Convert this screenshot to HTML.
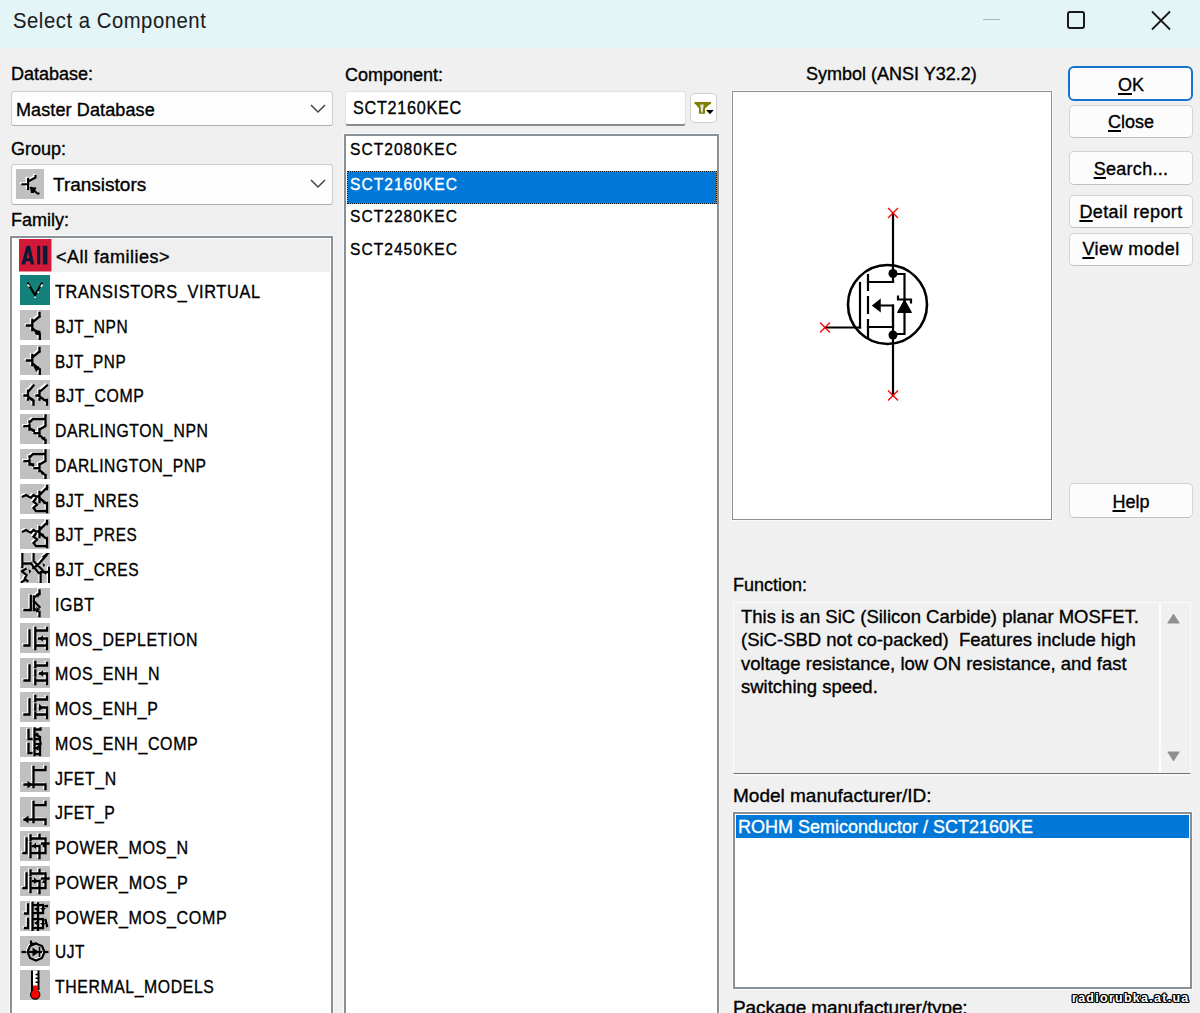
<!DOCTYPE html>
<html><head><meta charset="utf-8">
<style>
*{box-sizing:border-box;margin:0;padding:0}
html,body{width:1200px;height:1013px;overflow:hidden;background:#f0f0f0;font-family:"Liberation Sans",sans-serif;color:#000}
.a{position:absolute}
.t{position:absolute;white-space:pre;line-height:1;-webkit-text-stroke:0.35px currentColor}
#title{left:0;top:0;width:1200px;height:48px;background:#e3f5f7}
.dd{position:absolute;background:#fdfdfd;border:1.5px solid #cdcdcd;border-bottom:1.5px solid #b0b0b0;border-radius:3px}
.tb{position:absolute;background:#fff;border:1.2px solid #e2e2e2;border-bottom:2.2px solid #8c8c8c;border-radius:4px}
.btn{position:absolute;background:#fcfcfc;border:1.5px solid #d3d3d3;border-bottom-color:#c0c0c0;border-radius:5px}
.lb{position:absolute;background:#fff;border:2px solid #8a9097;box-shadow:0 0 0 1px #fafafa}
.ico{position:absolute;width:30px;height:30px;background:#c0c0c0}
.ico svg{display:block}
.bt{position:absolute;white-space:pre;line-height:1;-webkit-text-stroke:0.35px currentColor;width:124px;text-align:center;left:1069px}
.u{text-decoration:underline;text-decoration-thickness:2px;text-underline-offset:1.5px}
</style></head><body>
<div id="title" class="a">
  <div class="t" style="left:13px;top:10.1px;font-size:22px;letter-spacing:0.6px;transform:scaleX(0.92);transform-origin:0 0;-webkit-text-stroke:0.1px currentColor;color:#1c1c1c">Select a Component</div>
  <div class="a" style="left:983px;top:19px;width:17px;height:1px;background:#a9b8ba"></div>
  <div class="a" style="left:1067px;top:11px;width:18px;height:18px;border:2px solid #1a1a1a;border-radius:3px"></div>
  <svg class="a" style="left:1150px;top:10px" width="22" height="22" viewBox="0 0 22 22"><path d="M2 1.5 L20 19.5 M20 1.5 L2 19.5" stroke="#1a1a1a" stroke-width="1.8"/></svg>
</div>

<!-- Left column -->
<div class="t" style="left:11px;top:65px;font-size:18px">Database:</div>
<div class="dd" style="left:10.5px;top:91.25px;width:322px;height:34.25px"></div>
<div class="t" style="left:16px;top:100.5px;font-size:18px;letter-spacing:0.12px">Master Database</div>
<svg class="a" style="left:310px;top:104px" width="16" height="10"><path d="M1 1 L8 8 L15 1" fill="none" stroke="#444" stroke-width="1.5"/></svg>

<div class="t" style="left:11px;top:139.5px;font-size:18px">Group:</div>
<div class="dd" style="left:10.5px;top:164.2px;width:322px;height:40.8px"></div>
<div class="ico" style="left:16px;top:169.2px;width:28.4px;height:30px"><svg width="28.4" height="30" viewBox="0 0 28.4 30"><path d="M5.4 15.3H12.1M12.1 9V21M12.1 12.5L19.5 8.5V6M14 18L21.5 24.5H23.5" stroke="#fff" stroke-width="1.8" fill="none" transform="translate(-1.6,-1.2)"/><path d="M5.4 15.3H12.1M12.1 9V21M12.1 12.5L19.5 8.5V6M14 18L21.5 24.5H23.5" stroke="#000" stroke-width="2.1" fill="none"/><path d="M14 18L20.5 18.5L18 24H15Z" fill="#000"/></svg></div>
<div class="t" style="left:53px;top:175px;font-size:19px">Transistors</div>
<svg class="a" style="left:310px;top:179px" width="16" height="10"><path d="M1 1 L8 8 L15 1" fill="none" stroke="#444" stroke-width="1.5"/></svg>

<div class="t" style="left:11px;top:211px;font-size:18px">Family:</div>
<div class="lb" style="left:10px;top:236px;width:323px;height:800px"></div>
<div class="a" style="left:52px;top:239px;width:278px;height:33px;background:#efefef"></div>
<svg class="a" style="left:19.25px;top:239px" width="32.5" height="32.5" viewBox="0 0 32.5 32.5"><rect width="32.5" height="32.5" fill="#d21a38"/><path d="M2.3 25.4L7.6 6.8H11.2L15.2 25.4H11.8L11 22.3H7L6 25.4Z M7.9 19.2H10.3L9.1 12.5Z" fill="#0b1836" fill-rule="evenodd"/><rect x="18.1" y="6.8" width="3.2" height="18.6" fill="#0b1836"/><rect x="23.8" y="6.8" width="4.6" height="18.6" fill="#0b1836"/></svg>
<svg class="a" style="left:20px;top:275px" width="30" height="30" viewBox="0 0 30 30"><rect width="30" height="30" fill="#13807c"/><path d="M7.5 7.5L15 20L22.3 7.5" stroke="#000" stroke-width="2.2" fill="none"/><path d="M7.5 9.5L9.5 11.5M22.5 9.5L20.8 12M15 21.5V23M18.3 16.5V18" stroke="#fff" stroke-width="1.5"/></svg>
<div class="t" style="left:56px;top:248.36px;font-size:18px;color:#000;transform:scaleX(1.0000);transform-origin:0 0;letter-spacing:0.5px">&lt;All families&gt;</div>
<div class="t" style="left:55px;top:283.11px;font-size:18px;color:#000;transform:scaleX(0.9071);transform-origin:0 0;letter-spacing:0.7px">TRANSISTORS_VIRTUAL</div>
<div class="ico" style="left:20px;top:310.00px"><svg width="30" height="30" viewBox="0 0 30 30" preserveAspectRatio="none"><path d="M7 15.5H12.3M12.3 10V20M12.3 12.5L19.5 6.5M19.5 3V6.5M12.3 18L19.5 24.5M19.8 24.5V29" stroke="#fff" stroke-width="1.8" fill="none" stroke-linecap="square" transform="translate(-1.6,-1.2)"/><path d="M7 15.5H12.3M12.3 10V20M12.3 12.5L19.5 6.5M19.5 3V6.5M12.3 18L19.5 24.5M19.8 24.5V29" stroke="#000" stroke-width="2.3" fill="none" stroke-linecap="square"/><path d="M14 19.5L20.5 21V25.5L15.5 24.5Z" fill="#000"/></svg></div>
<div class="t" style="left:55px;top:317.86px;font-size:18px;color:#000;transform:scaleX(0.8627);transform-origin:0 0;letter-spacing:0.7px">BJT_NPN</div>
<div class="ico" style="left:20px;top:344.75px"><svg width="30" height="30" viewBox="0 0 30 30" preserveAspectRatio="none"><path d="M7 15.5H12.3M12.3 10V20M12.3 12.5L19.5 6.5M19.5 3V6.5M12.3 18L19.5 24.5M19.8 24.5V29" stroke="#fff" stroke-width="1.8" fill="none" stroke-linecap="square" transform="translate(-1.6,-1.2)"/><path d="M7 15.5H12.3M12.3 10V20M12.3 12.5L19.5 6.5M19.5 3V6.5M12.3 18L19.5 24.5M19.8 24.5V29" stroke="#000" stroke-width="2.3" fill="none" stroke-linecap="square"/><path d="M12.8 19.8L19.8 22L16.2 27Z" fill="#000"/></svg></div>
<div class="t" style="left:55px;top:352.61px;font-size:18px;color:#000;transform:scaleX(0.8489);transform-origin:0 0;letter-spacing:0.7px">BJT_PNP</div>
<div class="ico" style="left:20px;top:379.50px"><svg width="30" height="30" viewBox="0 0 30 30" preserveAspectRatio="none"><path d="M4.5 15.5H8M8 10.7V19.5M8 12L13.5 5.5M8 16.5L13.5 21M13.5 21V24.5M16.5 15.5H19.5M19.5 10.7V19.5M19.5 12L27 5.5M19.5 16.5L24.5 20H27V24.5" stroke="#fff" stroke-width="1.8" fill="none" stroke-linecap="square" transform="translate(-1.6,-1.2)"/><path d="M4.5 15.5H8M8 10.7V19.5M8 12L13.5 5.5M8 16.5L13.5 21M13.5 21V24.5M16.5 15.5H19.5M19.5 10.7V19.5M19.5 12L27 5.5M19.5 16.5L24.5 20H27V24.5" stroke="#000" stroke-width="2.3" fill="none" stroke-linecap="square"/><path d="M10.5 17.5L14 19L12.5 21Z" fill="#000"/><path d="M22 18L26 19.5V22L24 21Z" fill="#000"/></svg></div>
<div class="t" style="left:55px;top:387.36px;font-size:18px;color:#000;transform:scaleX(0.8800);transform-origin:0 0;letter-spacing:0.7px">BJT_COMP</div>
<div class="ico" style="left:20px;top:414.25px"><svg width="30" height="30" viewBox="0 0 30 30" preserveAspectRatio="none"><path d="M4.5 12.2H9.5M9.5 7.5V15.5M9.5 8.5L13 5H25.5M25.5 1.5V12L19.5 15.5M19.5 15V22M9.5 14L13 16.5M14.5 19.2H19.5M19.5 21L25.5 26.5M25.5 26V29" stroke="#fff" stroke-width="1.8" fill="none" stroke-linecap="square" transform="translate(-1.6,-1.2)"/><path d="M4.5 12.2H9.5M9.5 7.5V15.5M9.5 8.5L13 5H25.5M25.5 1.5V12L19.5 15.5M19.5 15V22M9.5 14L13 16.5M14.5 19.2H19.5M19.5 21L25.5 26.5M25.5 26V29" stroke="#000" stroke-width="2.3" fill="none" stroke-linecap="square"/><path d="M12 14.5L15 15.5V18.5L12.5 17.5Z" fill="#000"/><path d="M21 24.5L25.5 22.5L24.5 27Z" fill="#000"/></svg></div>
<div class="t" style="left:55px;top:422.11px;font-size:18px;color:#000;transform:scaleX(0.8747);transform-origin:0 0;letter-spacing:0.7px">DARLINGTON_NPN</div>
<div class="ico" style="left:20px;top:449.00px"><svg width="30" height="30" viewBox="0 0 30 30" preserveAspectRatio="none"><path d="M4.5 12.2H9.5M9.5 7.5V15.5M9.5 8.5L13 5H25.5M25.5 1.5V12L19.5 15.5M19.5 15V22M9.5 14L13 16.5M14.5 19.2H19.5M19.5 21L25.5 26.5M25.5 26V29" stroke="#fff" stroke-width="1.8" fill="none" stroke-linecap="square" transform="translate(-1.6,-1.2)"/><path d="M4.5 12.2H9.5M9.5 7.5V15.5M9.5 8.5L13 5H25.5M25.5 1.5V12L19.5 15.5M19.5 15V22M9.5 14L13 16.5M14.5 19.2H19.5M19.5 21L25.5 26.5M25.5 26V29" stroke="#000" stroke-width="2.3" fill="none" stroke-linecap="square"/><path d="M12 14L14.5 14.5L13.5 18Z" fill="#000"/><path d="M20 21.5L24.5 23.5L22 26Z" fill="#000"/></svg></div>
<div class="t" style="left:55px;top:456.86px;font-size:18px;color:#000;transform:scaleX(0.8688);transform-origin:0 0;letter-spacing:0.7px">DARLINGTON_PNP</div>
<div class="ico" style="left:20px;top:483.75px"><svg width="30" height="30" viewBox="0 0 30 30" preserveAspectRatio="none"><path d="M3 12.5L6 11L8.5 12.5L11 13.7L13.5 11L16 12.5H19.5M19.5 8V18M19.5 11L27 3.5M27 2V5M19.5 14L25.5 19H27V28M15.5 15L13.5 17.5L17 20.5L13.5 24L16 27H27" stroke="#fff" stroke-width="1.8" fill="none" stroke-linecap="square" transform="translate(-1.6,-1.2)"/><path d="M3 12.5L6 11L8.5 12.5L11 13.7L13.5 11L16 12.5H19.5M19.5 8V18M19.5 11L27 3.5M27 2V5M19.5 14L25.5 19H27V28M15.5 15L13.5 17.5L17 20.5L13.5 24L16 27H27" stroke="#000" stroke-width="2.3" fill="none" stroke-linecap="square"/><path d="M22 16.5L26 18L24 20.5Z" fill="#000"/></svg></div>
<div class="t" style="left:55px;top:491.61px;font-size:18px;color:#000;transform:scaleX(0.8625);transform-origin:0 0;letter-spacing:0.7px">BJT_NRES</div>
<div class="ico" style="left:20px;top:518.50px"><svg width="30" height="30" viewBox="0 0 30 30" preserveAspectRatio="none"><path d="M3 12.5L6 11L8.5 12.5L11 13.7L13.5 11L16 12.5H19.5M19.5 8V18M19.5 11L27 3.5M27 2V5M19.5 14L25.5 19H27V28M15.5 15L13.5 17.5L17 20.5L13.5 24L16 27H27" stroke="#fff" stroke-width="1.8" fill="none" stroke-linecap="square" transform="translate(-1.6,-1.2)"/><path d="M3 12.5L6 11L8.5 12.5L11 13.7L13.5 11L16 12.5H19.5M19.5 8V18M19.5 11L27 3.5M27 2V5M19.5 14L25.5 19H27V28M15.5 15L13.5 17.5L17 20.5L13.5 24L16 27H27" stroke="#000" stroke-width="2.3" fill="none" stroke-linecap="square"/><path d="M20.5 14L24 15L22.5 18Z" fill="#000"/></svg></div>
<div class="t" style="left:55px;top:526.36px;font-size:18px;color:#000;transform:scaleX(0.8516);transform-origin:0 0;letter-spacing:0.7px">BJT_PRES</div>
<div class="ico" style="left:20px;top:553.25px"><svg width="30" height="30" viewBox="0 0 32 30" preserveAspectRatio="none"><path d="M2.5 0V14M2.5 10.5H12M14.5 0V8L27 20M28.5 2L19 12L14 15M12 11L20 20M2 18L6 16M3 19L7 22L5 26L8 28M5 27L2 29M22 29V20M22 19H31M31 15V30M25 4L30 0" stroke="#fff" stroke-width="1.8" fill="none" stroke-linecap="square" transform="translate(-1.6,-1.2)"/><path d="M2.5 0V14M2.5 10.5H12M14.5 0V8L27 20M28.5 2L19 12L14 15M12 11L20 20M2 18L6 16M3 19L7 22L5 26L8 28M5 27L2 29M22 29V20M22 19H31M31 15V30M25 4L30 0" stroke="#000" stroke-width="2.3" fill="none" stroke-linecap="square"/><path d="M9 16L12 18L10 21Z" fill="#000"/><path d="M24 10L27 12L25 14Z" fill="#000"/></svg></div>
<div class="t" style="left:55px;top:561.11px;font-size:18px;color:#000;transform:scaleX(0.8625);transform-origin:0 0;letter-spacing:0.7px">BJT_CRES</div>
<div class="ico" style="left:20px;top:588.00px"><svg width="30" height="30" viewBox="0 0 30 30" preserveAspectRatio="none"><path d="M4.5 22H10.8V8M13.8 8.5V22M13.8 10L19.5 5M19.5 2.5V6M13.8 13L19.5 19M13.8 20L17 23M19.5 24V28" stroke="#fff" stroke-width="1.8" fill="none" stroke-linecap="square" transform="translate(-1.6,-1.2)"/><path d="M4.5 22H10.8V8M13.8 8.5V22M13.8 10L19.5 5M19.5 2.5V6M13.8 13L19.5 19M13.8 20L17 23M19.5 24V28" stroke="#000" stroke-width="2.3" fill="none" stroke-linecap="square"/><path d="M16 5.5L19.5 7L18 10Z" fill="#000"/><path d="M16 19L20 21L17.5 24Z" fill="#000"/></svg></div>
<div class="t" style="left:55px;top:595.86px;font-size:18px;color:#000;transform:scaleX(0.8843);transform-origin:0 0;letter-spacing:0.7px">IGBT</div>
<div class="ico" style="left:20px;top:622.75px"><svg width="30" height="30" viewBox="0 0 30 30" preserveAspectRatio="none"><path d="M4.5 22.5H9.5V7.5M15.3 5V26M15.3 7.5H27M27 5V7.5M19 15.5H27V26M15.3 22.5H27" stroke="#fff" stroke-width="1.8" fill="none" stroke-linecap="square" transform="translate(-1.6,-1.2)"/><path d="M4.5 22.5H9.5V7.5M15.3 5V26M15.3 7.5H27M27 5V7.5M19 15.5H27V26M15.3 22.5H27" stroke="#000" stroke-width="2.3" fill="none" stroke-linecap="square"/><path d="M18.5 15.5L23 12.5V18.5Z" fill="#000"/></svg></div>
<div class="t" style="left:55px;top:630.61px;font-size:18px;color:#000;transform:scaleX(0.8819);transform-origin:0 0;letter-spacing:0.7px">MOS_DEPLETION</div>
<div class="ico" style="left:20px;top:657.50px"><svg width="30" height="30" viewBox="0 0 30 30" preserveAspectRatio="none"><path d="M4.5 22.5H9.5V7.5M15.3 4V9M15.3 12.5V17.5M15.3 20.5V26M15.3 7.5H27M27 5V7.5M20 15.5H27V26M15.3 22.5H27" stroke="#fff" stroke-width="1.8" fill="none" stroke-linecap="square" transform="translate(-1.6,-1.2)"/><path d="M4.5 22.5H9.5V7.5M15.3 4V9M15.3 12.5V17.5M15.3 20.5V26M15.3 7.5H27M27 5V7.5M20 15.5H27V26M15.3 22.5H27" stroke="#000" stroke-width="2.3" fill="none" stroke-linecap="square"/><path d="M18.5 15.5L23 12.5V18.5Z" fill="#000"/></svg></div>
<div class="t" style="left:55px;top:665.36px;font-size:18px;color:#000;transform:scaleX(0.8881);transform-origin:0 0;letter-spacing:0.7px">MOS_ENH_N</div>
<div class="ico" style="left:20px;top:692.25px"><svg width="30" height="30" viewBox="0 0 30 30" preserveAspectRatio="none"><path d="M4.5 22.5H9.5V7.5M15.3 4V9M15.3 12.5V17.5M15.3 20.5V26M15.3 7.5H27M27 5V7.5M20 15.5H27V26M15.3 22.5H27" stroke="#fff" stroke-width="1.8" fill="none" stroke-linecap="square" transform="translate(-1.6,-1.2)"/><path d="M4.5 22.5H9.5V7.5M15.3 4V9M15.3 12.5V17.5M15.3 20.5V26M15.3 7.5H27M27 5V7.5M20 15.5H27V26M15.3 22.5H27" stroke="#000" stroke-width="2.3" fill="none" stroke-linecap="square"/><path d="M23.5 15.5L19 12V19Z" fill="#000"/></svg></div>
<div class="t" style="left:55px;top:700.11px;font-size:18px;color:#000;transform:scaleX(0.8819);transform-origin:0 0;letter-spacing:0.7px">MOS_ENH_P</div>
<div class="ico" style="left:20px;top:727.00px"><svg width="30" height="30" viewBox="0 0 30 30" preserveAspectRatio="none"><path d="M8.5 3V12H11.5M14.5 1.5V13.5M14.5 2.5H20.5V1.5M14.5 7L20 10V13.5M14.5 12H20M8.5 17V26H11.5M14.5 16V28M14.5 17H20.5V16M14.5 22L20 19V28M14.5 27H20" stroke="#fff" stroke-width="1.8" fill="none" stroke-linecap="square" transform="translate(-1.6,-1.2)"/><path d="M8.5 3V12H11.5M14.5 1.5V13.5M14.5 2.5H20.5V1.5M14.5 7L20 10V13.5M14.5 12H20M8.5 17V26H11.5M14.5 16V28M14.5 17H20.5V16M14.5 22L20 19V28M14.5 27H20" stroke="#000" stroke-width="2.3" fill="none" stroke-linecap="square"/><path d="M16 5L19 7L17 9Z" fill="#000"/><path d="M16 22L19 20L18.5 24Z" fill="#000"/></svg></div>
<div class="t" style="left:55px;top:734.86px;font-size:18px;color:#000;transform:scaleX(0.8881);transform-origin:0 0;letter-spacing:0.7px">MOS_ENH_COMP</div>
<div class="ico" style="left:20px;top:761.75px"><svg width="30" height="30" viewBox="0 0 30 30" preserveAspectRatio="none"><path d="M4.5 22.5H13.5M13.5 5V25M13.5 8H25.5V5M13.5 22.5H25.5V27" stroke="#fff" stroke-width="1.8" fill="none" stroke-linecap="square" transform="translate(-1.6,-1.2)"/><path d="M4.5 22.5H13.5M13.5 5V25M13.5 8H25.5V5M13.5 22.5H25.5V27" stroke="#000" stroke-width="2.3" fill="none" stroke-linecap="square"/><path d="M12.5 22.5L7.5 19V26.5Z" fill="#000"/></svg></div>
<div class="t" style="left:55px;top:769.61px;font-size:18px;color:#000;transform:scaleX(0.8795);transform-origin:0 0;letter-spacing:0.7px">JFET_N</div>
<div class="ico" style="left:20px;top:796.50px"><svg width="30" height="30" viewBox="0 0 30 30" preserveAspectRatio="none"><path d="M4.5 22.5H13.5M13.5 5V25M13.5 8H25.5V5M13.5 22.5H25.5V27" stroke="#fff" stroke-width="1.8" fill="none" stroke-linecap="square" transform="translate(-1.6,-1.2)"/><path d="M4.5 22.5H13.5M13.5 5V25M13.5 8H25.5V5M13.5 22.5H25.5V27" stroke="#000" stroke-width="2.3" fill="none" stroke-linecap="square"/><path d="M3.5 22.5L8.5 18.5V26.5Z" fill="#000"/></svg></div>
<div class="t" style="left:55px;top:804.36px;font-size:18px;color:#000;transform:scaleX(0.8737);transform-origin:0 0;letter-spacing:0.7px">JFET_P</div>
<div class="ico" style="left:20px;top:831.25px"><svg width="30" height="30" viewBox="0 0 30 30" preserveAspectRatio="none"><path d="M3.5 22H6.5V7.5M10.5 4.5V9M10.5 12V18.5M10.5 20V26M10.5 7.5H25.5V22H10.5M19.5 4V7.5M19.5 15V27M13 15H19.5M22 12.5H28.5" stroke="#fff" stroke-width="1.8" fill="none" stroke-linecap="square" transform="translate(-1.6,-1.2)"/><path d="M3.5 22H6.5V7.5M10.5 4.5V9M10.5 12V18.5M10.5 20V26M10.5 7.5H25.5V22H10.5M19.5 4V7.5M19.5 15V27M13 15H19.5M22 12.5H28.5" stroke="#000" stroke-width="2.3" fill="none" stroke-linecap="square"/><path d="M12.5 15L16 11.5V18Z" fill="#000"/><path d="M22 13.5L26 13.5L24 17Z" fill="#000"/></svg></div>
<div class="t" style="left:55px;top:839.11px;font-size:18px;color:#000;transform:scaleX(0.8933);transform-origin:0 0;letter-spacing:0.7px">POWER_MOS_N</div>
<div class="ico" style="left:20px;top:866.00px"><svg width="30" height="30" viewBox="0 0 30 30" preserveAspectRatio="none"><path d="M3.5 22H6.5V7.5M10.5 4.5V9M10.5 12V18.5M10.5 20V26M10.5 7.5H25.5V22H10.5M19.5 4V7.5M19.5 15V27M13 15H19.5M22 12.5H28.5" stroke="#fff" stroke-width="1.8" fill="none" stroke-linecap="square" transform="translate(-1.6,-1.2)"/><path d="M3.5 22H6.5V7.5M10.5 4.5V9M10.5 12V18.5M10.5 20V26M10.5 7.5H25.5V22H10.5M19.5 4V7.5M19.5 15V27M13 15H19.5M22 12.5H28.5" stroke="#000" stroke-width="2.3" fill="none" stroke-linecap="square"/><path d="M18 15L14 11.5V18Z" fill="#000"/><path d="M22 17L26 17L24 13.5Z" fill="#000"/></svg></div>
<div class="t" style="left:55px;top:873.86px;font-size:18px;color:#000;transform:scaleX(0.8966);transform-origin:0 0;letter-spacing:0.7px">POWER_MOS_P</div>
<div class="ico" style="left:20px;top:900.75px"><svg width="30" height="30" viewBox="0 0 30 30" preserveAspectRatio="none"><path d="M8 3.5V12.5H5M12.5 2V14M12.5 4H23M12.5 12H23M18 2.5V14M23 4V12M25.5 5H27M8 18V27H5M12.5 16V29M12.5 18H23M12.5 27H23M18 16.5V29M23 18V27M25.5 19L27 25" stroke="#fff" stroke-width="1.8" fill="none" stroke-linecap="square" transform="translate(-1.6,-1.2)"/><path d="M8 3.5V12.5H5M12.5 2V14M12.5 4H23M12.5 12H23M18 2.5V14M23 4V12M25.5 5H27M8 18V27H5M12.5 16V29M12.5 18H23M12.5 27H23M18 16.5V29M23 18V27M25.5 19L27 25" stroke="#000" stroke-width="2.3" fill="none" stroke-linecap="square"/><path d="M14 8L17 6V10Z" fill="#000"/><path d="M14 22L17 20V24Z" fill="#000"/><path d="M20 7H26L23 10Z" fill="#000"/><path d="M20 22H26L23 25Z" fill="#000"/></svg></div>
<div class="t" style="left:55px;top:908.61px;font-size:18px;color:#000;transform:scaleX(0.8937);transform-origin:0 0;letter-spacing:0.7px">POWER_MOS_COMP</div>
<div class="ico" style="left:20px;top:935.50px"><svg width="30" height="30" viewBox="0 0 30 30"><path d="M1.5 16H28.5" stroke="#000" stroke-width="2.2"/><path d="M16 7.5L22 10L24.5 16L22 22L16 24.5L10 22L7.5 16L10 10Z" stroke="#fff" stroke-width="1.6" fill="none" transform="translate(-1,-1)"/><path d="M16 7.5L22 10L24.5 16L22 22L16 24.5L10 22L7.5 16L10 10Z" stroke="#000" stroke-width="2.2" fill="none"/><path d="M11 4.5V10M11 7.5H17" stroke="#000" stroke-width="2" fill="none"/><path d="M12.5 11.5L19 16L12.5 20.5Z" fill="#000"/><path d="M19.5 11V21" stroke="#000" stroke-width="1.5"/></svg></div>
<div class="t" style="left:55px;top:943.36px;font-size:18px;color:#000;transform:scaleX(0.8561);transform-origin:0 0;letter-spacing:0.7px">UJT</div>
<div class="ico" style="left:20px;top:970.25px"><svg width="30" height="30" viewBox="0 0 30 30"><rect x="12.5" y="1" width="5.5" height="20" fill="#fff"/><path d="M12 0.5V21.5M18.5 0.5V20" stroke="#000" stroke-width="2"/><path d="M15.5 4.5H18M15.5 8.3H18M15.5 12.2H18" stroke="#000" stroke-width="1.6"/><rect x="13" y="15.5" width="5" height="7" fill="#f00"/><circle cx="15.2" cy="24.6" r="4.6" fill="#f00" stroke="#000" stroke-width="1.2"/><rect x="13" y="17" width="5" height="5" fill="#f00"/></svg></div>
<div class="t" style="left:55px;top:978.11px;font-size:18px;color:#000;transform:scaleX(0.8768);transform-origin:0 0;letter-spacing:0.7px">THERMAL_MODELS</div>


<!-- Middle column -->
<div class="t" style="left:345px;top:66px;font-size:18px">Component:</div>
<div class="tb" style="left:344.5px;top:91.3px;width:341.5px;height:34.4px;border-radius:3px"></div>
<div class="t" style="left:353px;top:99px;font-size:18px;letter-spacing:0.8px;transform:scaleX(0.9);transform-origin:0 0">SCT2160KEC</div>
<div class="a" style="left:689.75px;top:92.7px;width:27.5px;height:30.6px;border:1.8px solid #cfcfcf;border-radius:5px;background:#fff"></div>
<svg class="a" style="left:694px;top:101px" width="20" height="14" viewBox="0 0 20 14"><rect x="0.5" y="1" width="16.4" height="2.2" fill="#7f7f00"/><path d="M1.5 3H16L11 7.5V12.7H5V7.5Z" fill="#7f7f00"/><path d="M6.2 3.6H9.8L8.6 11.5H7.2Z" fill="#e6e6da"/><path d="M12 9H19.8L16 13.25Z" fill="#000"/></svg>
<div class="lb" style="left:344px;top:134.3px;width:375px;height:900px"></div>
<div class="a" style="left:347px;top:170.5px;width:370px;height:33.5px;border:1px dotted #111;background:linear-gradient(#0078d7,#0078d7) padding-box,#e09030 border-box"></div>
<div class="t" style="left:350px;top:141px;font-size:17.3px;letter-spacing:1.15px;transform:scaleX(0.9);transform-origin:0 0">SCT2080KEC</div>
<div class="t" style="left:350px;top:175.5px;font-size:17.3px;color:#fff;letter-spacing:1.15px;transform:scaleX(0.9);transform-origin:0 0">SCT2160KEC</div>
<div class="t" style="left:350px;top:208px;font-size:17.3px;letter-spacing:1.15px;transform:scaleX(0.9);transform-origin:0 0">SCT2280KEC</div>
<div class="t" style="left:350px;top:241px;font-size:17.3px;letter-spacing:1.15px;transform:scaleX(0.9);transform-origin:0 0">SCT2450KEC</div>

<!-- Right: symbol -->
<div class="t" style="left:806px;top:65px;font-size:18px">Symbol (ANSI Y32.2)</div>
<div class="lb" style="left:732.25px;top:91px;width:319.75px;height:428.75px;border:1.7px solid #8f8f8f"></div>
<svg class="a" style="left:735px;top:93px" width="316" height="424" viewBox="735 93 316 424">
<g stroke="#000" stroke-width="2.2" fill="none" stroke-linecap="square">
<circle cx="887.5" cy="304.5" r="39.5" stroke-width="2.6"/>
<path d="M893 213V282M893 305.5V395.5"/>
<path d="M825 327.5H860"/>
<path d="M860 283V327.5"/>
<path d="M868 275V290M868 297V313M868 320V338"/>
<path d="M868 282H893M868 327H893M876 305.5H893V327"/>
<path d="M893 274H904.5V334H893"/>
<path d="M898 299.5H911M898 299.5V296.5M911 299.5V302.5"/>
</g>
<circle cx="893" cy="273.5" r="4.5" fill="#000"/>
<circle cx="893" cy="335" r="4.5" fill="#000"/>
<path d="M873 305.5L880 300V311Z" fill="#000" stroke="#000" stroke-width="1.5"/>
<path d="M897.5 312.5L904.5 300L911.5 312.5Z" fill="#000" stroke="#000" stroke-width="1"/>
<g stroke="#f00" stroke-width="1.3">
<path d="M888 208L898 218M898 208L888 218"/>
<path d="M888 390.5L898 400.5M898 390.5L888 400.5"/>
<path d="M820 322.5L830 332.5M830 322.5L820 332.5"/>
</g>
</svg>


<!-- Buttons -->
<div class="btn" style="left:1068.3px;top:65.9px;width:124.7px;height:35.1px;border:2px solid #1474cf;border-radius:6px"></div>
<div class="btn" style="left:1068.5px;top:104.7px;width:124.5px;height:33.3px"></div>
<div class="btn" style="left:1069px;top:151px;width:124px;height:34px"></div>
<div class="btn" style="left:1069px;top:195px;width:124px;height:33px"></div>
<div class="btn" style="left:1069px;top:233px;width:124px;height:33px"></div>
<div class="btn" style="left:1069px;top:483px;width:124px;height:35px"></div>
<div class="bt" style="top:75.5px;font-size:18px"><span class="u">O</span>K</div>
<div class="bt" style="top:113.4px;font-size:18px"><span class="u">C</span>lose</div>
<div class="bt" style="top:159.5px;font-size:18px;letter-spacing:0.3px"><span class="u">S</span>earch...</div>
<div class="bt" style="top:202.7px;font-size:18px;letter-spacing:0.4px"><span class="u">D</span>etail report</div>
<div class="bt" style="top:240.2px;font-size:18px;letter-spacing:0.45px"><span class="u">V</span>iew model</div>
<div class="bt" style="top:492.5px;font-size:18px"><span class="u">H</span>elp</div>

<!-- Function -->
<div class="t" style="left:733px;top:575.5px;font-size:18px">Function:</div>
<div class="a" style="left:733px;top:601.75px;width:457.5px;height:172.5px;background:#f0f0f0;border:1.5px solid #fbfbfb;border-bottom:1.6px solid #707070;box-shadow:0 1.5px 0 #fafafa"></div>
<div class="a" style="left:1158.5px;top:603px;width:31px;height:169.5px;background:#f0f0f0;border-left:2px solid #fbfbfb"></div>
<svg class="a" style="left:1165px;top:611px" width="17" height="15"><path d="M3 12L8.5 3.5L14 12Z" fill="#8f8f8f" stroke="#8f8f8f" stroke-width="1.2" stroke-linejoin="round"/></svg>
<svg class="a" style="left:1165px;top:749px" width="17" height="15"><path d="M3 3L8.5 11.5L14 3Z" fill="#8f8f8f" stroke="#8f8f8f" stroke-width="1.2" stroke-linejoin="round"/></svg>
<div class="t" style="left:741px;top:608.3px;font-size:18.5px">This is an SiC (Silicon Carbide) planar MOSFET.</div>
<div class="t" style="left:741px;top:631.4px;font-size:18.5px">(SiC-SBD not co-packed)  Features include high</div>
<div class="t" style="left:741px;top:654.5px;font-size:18.5px">voltage resistance, low ON resistance, and fast</div>
<div class="t" style="left:741px;top:677.6px;font-size:18.5px">switching speed.</div>

<!-- Model -->
<div class="t" style="left:733px;top:786px;font-size:19px">Model manufacturer/ID:</div>
<div class="lb" style="left:733px;top:812px;width:459px;height:177px"></div>
<div class="a" style="left:736px;top:815px;width:453px;height:23px;background:#0078d7"></div>
<div class="t" style="left:738px;top:818px;font-size:18px;color:#fff">ROHM Semiconductor / SCT2160KE</div>
<div class="t" style="left:733px;top:998px;font-size:19px;letter-spacing:-0.12px">Package manufacturer/type:</div>
<div class="t" style="left:1072px;top:992px;font-size:12.5px;letter-spacing:1.27px;font-weight:bold;color:#fff;-webkit-text-stroke:0;text-shadow:1.2px 0 0 #000,-1.2px 0 0 #000,0 1.2px 0 #000,0 -1.2px 0 #000,1px 1px 0 #000,-1px -1px 0 #000,1px -1px 0 #000,-1px 1px 0 #000">radiorubka.at.ua</div>
</body></html>
